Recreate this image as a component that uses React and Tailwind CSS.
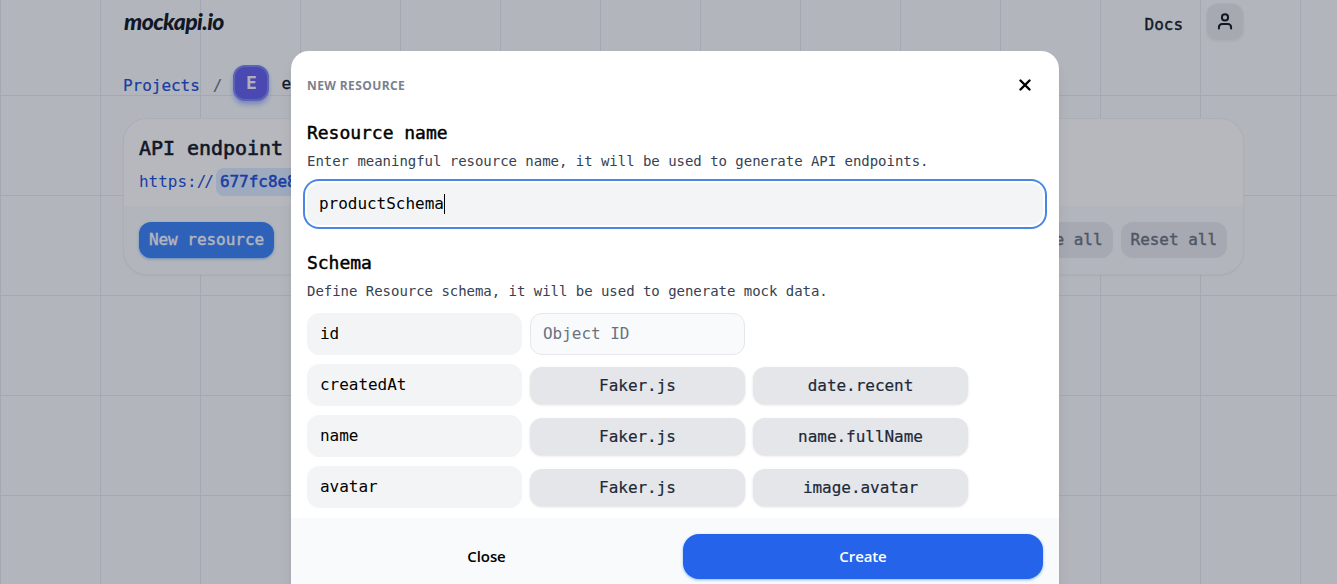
import React from "react";

const rows = [
  { name: "createdAt", method: "date.recent" },
  { name: "name", method: "name.fullName" },
  { name: "avatar", method: "image.avatar" },
];

const field =
  "flex h-[42px] w-[215px] items-center rounded-xl border px-3 text-base text-black";
const pill =
  "mt-px flex h-[37px] w-[215px] items-center justify-center rounded-xl bg-[#e5e6ea] text-base text-gray-800 shadow-sm [-webkit-text-stroke:0.2px_#1f2937]";

function Header() {
  return (
    <header className="flex h-[44px] items-center justify-between">
      <div className="-mt-px ml-px font-['Lato'] text-[23px] leading-none font-black tracking-[-0.6px] text-[#111827] italic">
        mockapi.io
      </div>
      <div className="flex items-center gap-[23px]">
        <span className="mt-[5px] text-base text-[#111827] [-webkit-text-stroke:0.4px_#111827]">Docs</span>
        <button className="-mr-px flex size-[38px] items-center justify-center rounded-xl border border-[#f0f1f4] bg-[#e8e9ed] shadow-xs">
          <svg width="18" height="20" viewBox="0 0 18 20" fill="none" stroke="#111827" strokeWidth="2">
            <circle cx="9" cy="5.4" r="3.1" />
            <path d="M2.9 16.4v-1.2a3.2 3.2 0 0 1 3.2-3.2h5.8a3.2 3.2 0 0 1 3.2 3.2v1.2" strokeLinecap="round" />
          </svg>
        </button>
      </div>
    </header>
  );
}

function Breadcrumbs() {
  return (
    <nav className="mt-[20px] flex h-[38px] items-center text-base">
      <a className="mt-[6px] text-[#1d4ed8] [-webkit-text-stroke:0.2px_#1d4ed8]">Projects</a>
      <span className="mt-[6px] ml-[13px] text-gray-500">/</span>
      <span className="ml-[11px] flex size-[36px] items-center justify-center rounded-xl border-2 border-[#7d86f4] bg-[#625fec] text-lg font-bold text-gray-100 shadow-md shadow-indigo-300">
        E
      </span>
      <span className="mt-px ml-3 text-[#111827] [-webkit-text-stroke:0.3px_#111827]">e</span>
    </nav>
  );
}

function EndpointCard() {
  return (
    <section className="mt-[16px] -mr-px flex h-[157px] flex-col overflow-hidden rounded-3xl border border-gray-200/50 bg-[#f8fafb] shadow-xs">
      <div className="h-[87px] bg-[#fefefe] px-[15px] pt-[15px]">
        <h2 className="text-xl leading-[28px] text-[#111827] [-webkit-text-stroke:0.6px_#111827]">API endpoint</h2>
        <p className="mt-[6px] flex items-center text-base leading-[28px] text-[#1d4ed8]">
          https:<span className="tracking-[-2px]">//</span>
          <span className="ml-[4px] rounded-lg bg-blue-100 px-1 [-webkit-text-stroke:0.5px_#1d4ed8]">
            677fc8e80476123f76a7e213
          </span>
        </p>
      </div>
      <div className="flex flex-1 items-start justify-between pt-4 pr-4 pl-[15px]">
        <button className="h-[36px] w-[135px] rounded-xl bg-[#3b82f6] text-base text-[#f9fafb] shadow-sm shadow-blue-300 [-webkit-text-stroke:0.4px_#f9fafb]">
          New resource
        </button>
        <div className="flex gap-2 text-gray-500">
          <button className="h-[36px] rounded-xl border border-gray-200/60 bg-[#e7e9ed] px-[9px] text-base [-webkit-text-stroke:0.4px_#6b7280]">
            Generate all
          </button>
          <button className="h-[36px] rounded-xl border border-gray-200/60 bg-[#e7e9ed] px-[9px] text-base [-webkit-text-stroke:0.4px_#6b7280]">
            Reset all
          </button>
        </div>
      </div>
    </section>
  );
}

function Dialog() {
  return (
    <div className="flex h-[600px] w-[768px] flex-col overflow-hidden rounded-t-[18px] bg-white shadow-lg">
      <div className="flex h-[69px] shrink-0 items-center justify-between pr-[28px] pl-4">
        <h3 className="font-['Open_Sans'] text-xs font-bold tracking-[0.4px] text-[#7a818d]">NEW RESOURCE</h3>
        <svg className="-mt-px" width="12" height="12" viewBox="0 0 12 12" stroke="#000" strokeWidth="2.4" strokeLinecap="round">
          <path d="M1.5 1.5l9 9M10.5 1.5l-9 9" />
        </svg>
      </div>
      <div className="flex h-[398px] shrink-0 flex-col px-4">
        <h4 className="-mt-px text-lg leading-[27px] text-black [-webkit-text-stroke:0.45px_#000]">Resource name</h4>
        <p className="mt-[3px] text-sm leading-[24px] text-[#374151]">
          Enter meaningful resource name, it will be used to generate API endpoints.
        </p>
        <div className="mt-[10px] flex h-[42px] items-center rounded-xl bg-gray-100 px-3 text-base text-black ring-2 ring-[#4a86e4] ring-offset-2">
          productSchema
          <span className="h-5 w-px bg-black" />
        </div>
        <h4 className="mt-[24px] text-lg leading-[27px] text-black [-webkit-text-stroke:0.45px_#000]">Schema</h4>
        <p className="mt-[3px] text-sm leading-[24px] text-[#374151]">
          Define Resource schema, it will be used to generate mock data.
        </p>
        <div className="mt-[10px] flex flex-col gap-[9px]">
          <div className="flex items-center gap-2">
            <div className={field + " border-gray-100 bg-gray-100"}>id</div>
            <div className="flex h-[42px] w-[215px] items-center rounded-xl border border-gray-200 bg-gray-50 px-3 text-base text-gray-500">
              Object ID
            </div>
          </div>
          {rows.map((r) => (
            <div key={r.name} className="flex h-[42px] items-center gap-2">
              <div className={field + " border-gray-100 bg-gray-100"}>{r.name}</div>
              <div className={pill}>Faker.js</div>
              <div className={pill}>{r.method}</div>
            </div>
          ))}
        </div>
      </div>
      <div className="flex flex-1 items-start bg-gray-50 px-4 pt-4 font-['Open_Sans'] text-[15px] font-semibold tracking-[-0.1px]">
        <button className="h-[45px] w-[359px] text-black">Close</button>
        <button className="ml-[17px] h-[45px] w-[360px] rounded-2xl bg-[#2563eb] text-white shadow-sm shadow-blue-300">
          Create
        </button>
      </div>
    </div>
  );
}

export default function App() {
  return (
    <div className="relative h-[584px] w-full overflow-hidden bg-[#f8fbfc] bg-[linear-gradient(to_right,#e4e8ec_1px,transparent_1px),linear-gradient(to_bottom,#e4e8ec_1px,transparent_1px)] bg-[size:100px_100px] bg-[position:0_-5px] font-['DejaVu_Sans_Mono','Liberation_Mono',monospace] tracking-[-0.03px]">
      <main className="ml-[123px] w-[1120px]">
        <Header />
        <Breadcrumbs />
        <EndpointCard />
      </main>
      <div className="absolute inset-0 flex justify-center bg-[#111827]/30 pt-[51px] pl-[13px]">
        <Dialog />
      </div>
    </div>
  );
}
